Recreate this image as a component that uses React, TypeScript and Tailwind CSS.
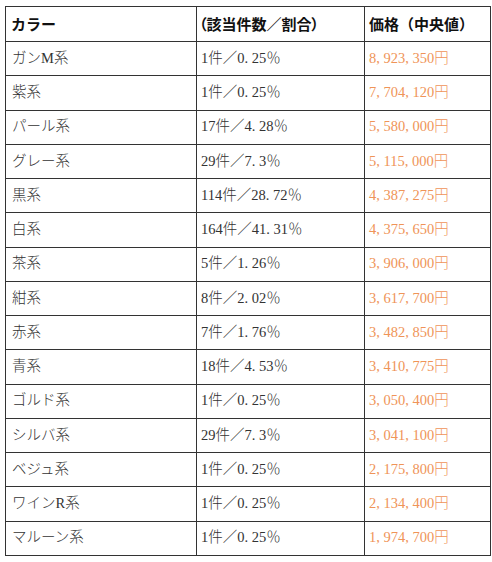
import React from 'react';

const rows = [
  ['ガンM系', '1件／0.25％', '8,923,350円'],
  ['紫系', '1件／0.25％', '7,704,120円'],
  ['パール系', '17件／4.28％', '5,580,000円'],
  ['グレー系', '29件／7.3％', '5,115,000円'],
  ['黒系', '114件／28.72％', '4,387,275円'],
  ['白系', '164件／41.31％', '4,375,650円'],
  ['茶系', '5件／1.26％', '3,906,000円'],
  ['紺系', '8件／2.02％', '3,617,700円'],
  ['赤系', '7件／1.76％', '3,482,850円'],
  ['青系', '18件／4.53％', '3,410,775円'],
  ['ゴルド系', '1件／0.25％', '3,050,400円'],
  ['シルバ系', '29件／7.3％', '3,041,100円'],
  ['ベジュ系', '1件／0.25％', '2,175,800円'],
  ['ワインR系', '1件／0.25％', '2,134,400円'],
  ['マルーン系', '1件／0.25％', '1,974,700円'],
];

// comma and period take half an em, as in the mincho face of the original
const Num = ({ text }: { text: string }) => (
  <>
    {text.split(/([,.])/).map((part, i) =>
      part === ',' || part === '.' ? (
        <span key={i} className="inline-block w-[0.5em]">
          {part}
        </span>
      ) : (
        <React.Fragment key={i}>{part}</React.Fragment>
      )
    )}
  </>
);

const cell = 'border-[1.5px] border-[#333]';

const App = () => {
  return (
    <div className="w-[492px] h-[562px] bg-white pt-[6px] pl-[5px]">
      <table className="border-collapse w-[485px] table-fixed text-[#333] font-['Liberation_Serif','Noto_Sans_CJK_JP',serif] text-[14.5px] font-light">
        <colgroup>
          <col className="w-[191px]" />
          <col className="w-[168px]" />
          <col className="w-[126px]" />
        </colgroup>
        <thead>
          <tr className="h-[35px] font-['Noto_Sans_CJK_JP',sans-serif] text-[15px] text-[#111]">
            <th className={`${cell} text-left pl-[5px] font-bold`}>カラー</th>
            <th className={`${cell} text-left pl-[2px] font-bold [font-feature-settings:'palt']`}>（該当件数／割合）</th>
            <th className={`${cell} text-left pl-[4px] font-bold`}>価格（中央値）</th>
          </tr>
        </thead>
        <tbody>
          {rows.map((r, i) => (
            <tr key={i} className="h-[34.27px]">
              <td className={`${cell} pl-[6px]`}>{r[0]}</td>
              <td className={`${cell} pl-[4px]`}>
                <Num text={r[1]} />
              </td>
              <td className={`${cell} pl-[4px] text-[#ef9458]`}>
                <Num text={r[2]} />
              </td>
            </tr>
          ))}
        </tbody>
      </table>
    </div>
  );
};

export default App;
